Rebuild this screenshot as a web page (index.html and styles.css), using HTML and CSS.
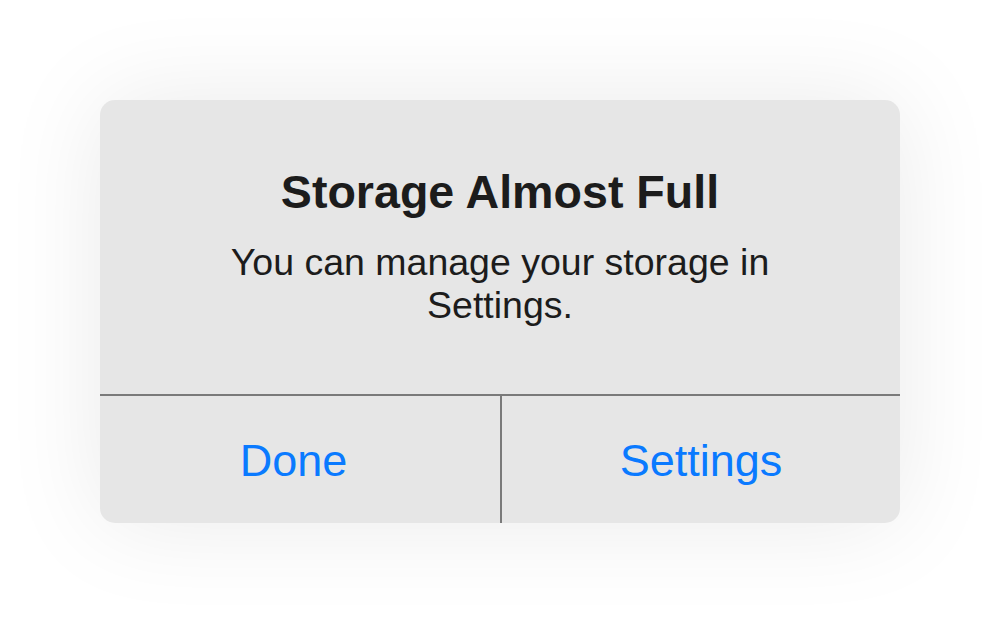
FILE: index.html
```html
<!DOCTYPE html>
<html lang="en">
<head>
<meta charset="utf-8">
<title>Storage Almost Full</title>
<link rel="stylesheet" href="styles.css">
</head>
<body>
  <div class="alert" role="alertdialog" aria-labelledby="alert-title">
    <div class="alert-content">
      <h1 id="alert-title" class="alert-title">Storage Almost Full</h1>
      <p class="alert-message">You can manage your storage in Settings.</p>
    </div>
    <div class="alert-actions">
      <button class="alert-btn alert-btn-left">Done</button>
      <button class="alert-btn alert-btn-right">Settings</button>
    </div>
  </div>
</body>
</html>
```

FILE: styles.css
```css
html, body {
  margin: 0;
  padding: 0;
  background: #ffffff;
}

body {
  width: 1000px;
  height: 624px;
  padding: 100px;
  box-sizing: border-box;
  font-family: "Liberation Sans", Arial, sans-serif;
}

.alert {
  width: 800px;
  height: 423px;
  background: #e6e6e6;
  border-radius: 15px;
  box-shadow: 0 0 100px 0 rgba(0, 0, 0, 0.085);
  display: flex;
  flex-direction: column;
  overflow: hidden;
}

.alert-content {
  height: 294px;
  box-sizing: border-box;
  padding: 65px 100px 0;
  text-align: center;
  color: #1c1c1c;
}

.alert-title {
  margin: 0;
  font-size: 46.6px;
  line-height: 54px;
  font-weight: 700;
}

.alert-message {
  margin: 22px 0 0;
  font-size: 37.5px;
  line-height: 43px;
  font-weight: 400;
}

.alert-actions {
  flex: 1;
  display: grid;
  grid-template-columns: minmax(0, 1fr) minmax(0, 1fr);
  border-top: 2px solid #7a7a7a;
}

.alert-btn {
  margin: 0;
  border: 0;
  background: transparent;
  font-family: "Liberation Sans", Arial, sans-serif;
  font-size: 45px;
  color: #0a7aff;
  padding: 2px 0 0;
  cursor: pointer;
}

.alert-btn-left {
  padding-right: 13px;
}

.alert-btn-right {
  border-left: 2px solid #7a7a7a;
}
```
